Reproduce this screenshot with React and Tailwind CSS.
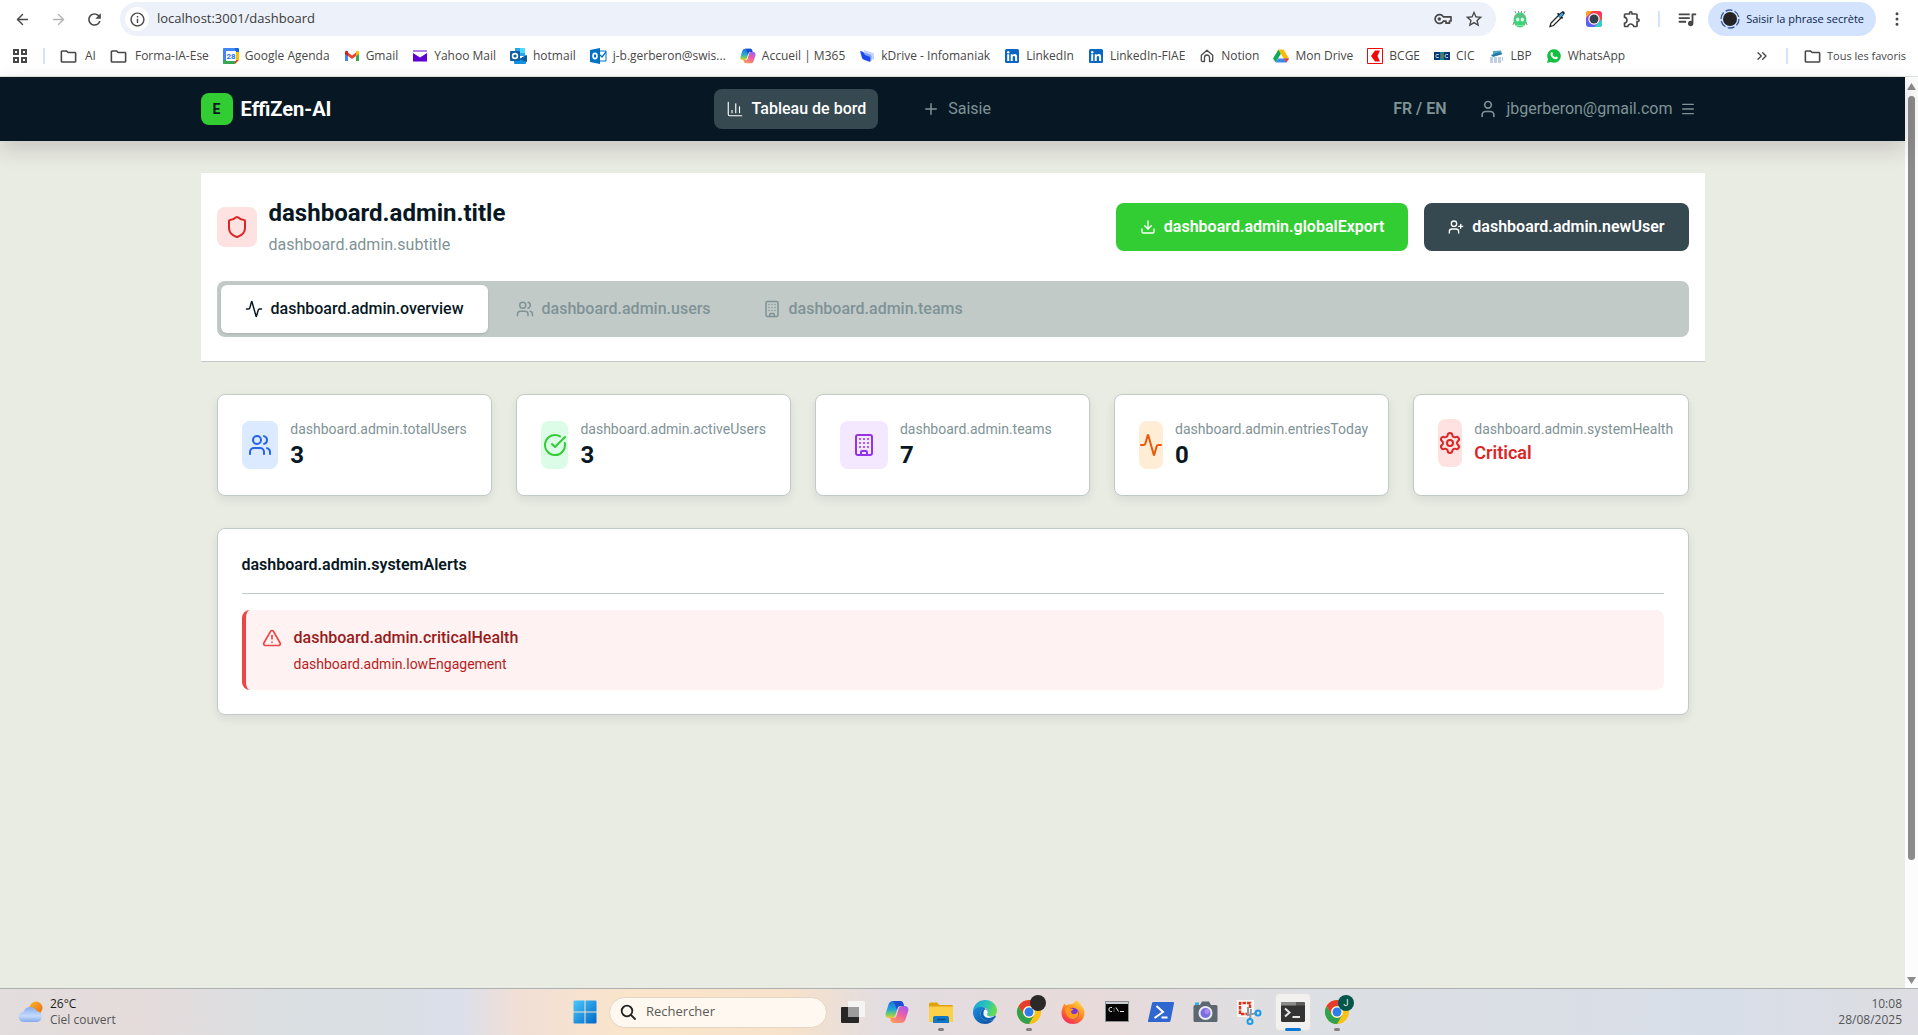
import React from "react";
import {
  Activity,
  ArrowLeft,
  ArrowRight,
  Building,
  ChartColumn,
  ChevronsRight,
  CircleCheckBig,
  Download,
  EllipsisVertical,
  Menu,
  Plus,
  Settings,
  Shield,
  TriangleAlert,
  User,
  UserPlus,
  Users,
} from "lucide-react";
import {
  MdInfoOutline,
  MdOutlineExtension,
  MdOutlineFolder,
  MdOutlineQueueMusic,
  MdRefresh,
  MdStarOutline,
} from "react-icons/md";

/* ---------- Browser icons ---------- */

const Folder = () => <MdOutlineFolder size={19} className="-mx-px shrink-0 text-[#474747]" />;

const AppsGrid = () => (
  <svg width="16" height="16" viewBox="0 0 16 16" fill="none" stroke="#474747" strokeWidth="2">
    <path d="M2 2h4v4H2zM10 2h4v4h-4zM2 10h4v4H2zM10 10h4v4h-4z" />
  </svg>
);

const KeyIcon = () => (
  <svg width="18" height="12" viewBox="0 0 18 12" fill="none" stroke="#474747" strokeWidth="1.700" strokeLinejoin="round">
    <path d="M9.300 3.800A4.400 4.400 0 1 0 9.300 8.200H12v2h3.500V8H17V3.800z" />
    <circle cx="5.300" cy="6" r="1.700" fill="#474747" stroke="none" />
  </svg>
);

const CalendarLogo = () => (
  <svg width="16" height="16" viewBox="0 0 16 16">
    <path d="M0 1a1 1 0 0 1 1-1h11v4H4v12H1a1 1 0 0 1-1-1z" fill="#4285f4" />
    <path d="M12 0h3a1 1 0 0 1 1 1v3h-4z" fill="#1967d2" />
    <path d="M12 4h4v8h-4z" fill="#fbbc04" />
    <path d="M4 12h8v4H1l-1-1v-3z" fill="#34a853" />
    <path d="M12 12h4l-4 4z" fill="#ea4335" />
    <path d="M3 3h10v10H3z" fill="#fff" />
    <text x="8" y="11" fontSize="8" fontWeight="700" textAnchor="middle" fill="#1a73e8" fontFamily="Roboto, sans-serif">28</text>
  </svg>
);

const GmailLogo = () => (
  <svg width="16" height="16" viewBox="0 0 16 16">
    <path d="M1 4v9h3V7z" fill="#4285f4" />
    <path d="M15 4v9h-3V7z" fill="#34a853" />
    <path d="M4 4.500l4 3 4-3V8l-4 3-4-3z" fill="#ea4335" />
    <path d="M1 4.500C1 2.500 2.800 2.500 4 3.500V8L1 6z" fill="#c5221f" />
    <path d="M15 4.500c0-2-1.800-2-3-1V8l3-2z" fill="#fbbc04" />
  </svg>
);

const YahooLogo = () => (
  <svg width="16" height="16" viewBox="0 0 16 16">
    <path d="M1 2.500h14V13.500H1z" fill="#6001d2" />
    <path d="M1 3.500h14v1.500L8 9.500 1 5z" fill="#fff" />
  </svg>
);

const OutlookLogo = () => (
  <svg width="17" height="16" viewBox="0 0 17 16">
    <path d="M5 0h10v8H5z" fill="#28a8ea" />
    <path d="M10 0h5v5h-5z" fill="#50d9ff" />
    <path d="M4 8l6 3 6-4v8a1 1 0 0 1-1 1H5a1 1 0 0 1-1-1z" fill="#1490df" />
    <path d="M9 11l8-4v7z" fill="#0a5a9e" />
    <rect y="3" width="10" height="10" rx="1" fill="#0f5ea8" />
    <circle cx="5" cy="8" r="2.400" fill="none" stroke="#fff" strokeWidth="1.600" />
  </svg>
);

const OutlookWebLogo = () => (
  <svg width="17" height="16" viewBox="0 0 17 16">
    <path d="M9 3h7v10H9z" fill="#fff" stroke="#0072c6" />
    <path d="M9 6l3 3 4-5" fill="none" stroke="#0072c6" strokeWidth="1.300" />
    <path d="M0 2l10-2v16L0 14z" fill="#0072c6" />
    <ellipse cx="5" cy="8" rx="2" ry="2.600" fill="none" stroke="#fff" strokeWidth="1.600" />
  </svg>
);

const CopilotLogo = ({ size = 16 }) => (
  <svg width={size} height={size} viewBox="0 0 24 24">
    <defs>
      <linearGradient id={`cpA${size}`} x1="0" y1="0" x2="0" y2="1">
        <stop offset="0" stopColor="#1f6fe5" />
        <stop offset="0.500" stopColor="#22a7d6" />
        <stop offset="0.800" stopColor="#7ccf5b" />
        <stop offset="1" stopColor="#f6c52c" />
      </linearGradient>
      <linearGradient id={`cpB${size}`} x1="0.800" y1="0" x2="0.300" y2="1">
        <stop offset="0" stopColor="#a15bf0" />
        <stop offset="0.500" stopColor="#ee5fa5" />
        <stop offset="1" stopColor="#ff9a5a" />
      </linearGradient>
    </defs>
    <path d="M8 1h7.500c1.300 0 2.300 1 2.700 2.200L19 6h-3.500c-1.600 0-2.600.8-3 2.300L10.500 15c-.6 2-1.600 3-3.500 3H4.500C1.500 18 0 16 .8 13L3.500 4.500C4.300 2.200 5.600 1 8 1z" fill={`url(#cpA${size})`} />
    <path d="M16 23H8.500c-1.300 0-2.300-1-2.700-2.200L5 18h3.500c1.600 0 2.600-.8 3-2.300L13.500 9c.6-2 1.600-3 3.500-3h2.500c3 0 4.500 2 3.700 5l-2.700 8.500C19.700 21.800 18.400 23 16 23z" fill={`url(#cpB${size})`} />
    <path d="M8 1h7.500c1.300 0 2.300 1 2.700 2.200L19 6h-3.500c-1.600 0-2.600.8-3 2.300L12 10 9.500 3.500z" fill="#1c4fd0" />
  </svg>
);

const KDriveLogo = () => (
  <svg width="16" height="16" viewBox="0 0 16 16">
    <path d="M5 2l8 2.500c1.500.5 2 1 2 2V12L5 8z" fill="#c3d3fb" />
    <path d="M3 4l8 2.500c1 .4 1.500 1 1.500 2V13L3 10z" fill="#7ea2f7" />
    <path d="M1 3l3 .8L6 7l4 1.500c1 .4 1.300 1 1.300 2V14L5.500 12C4.200 11.500 3.500 11 3 10z" fill="#1b49f0" />
  </svg>
);

const LinkedInLogo = () => (
  <svg width="16" height="16" viewBox="0 0 16 16">
    <rect x="1" y="1" width="14" height="14" rx="1.500" fill="#0a66c2" />
    <path d="M3.200 6.300h2V13h-2zM6.700 6.300h2v1c.5-.8 1.200-1.200 2.100-1.200 1.800 0 2.300 1.200 2.300 2.900v4h-2V9.500c0-.9-.3-1.600-1.100-1.600-.9 0-1.300.7-1.300 1.600V13h-2z" fill="#fff" />
    <circle cx="4.200" cy="4.200" r="1.200" fill="#fff" />
  </svg>
);

const NotionHome = () => (
  <svg width="16" height="16" viewBox="0 0 16 16" fill="none" stroke="#4a4a4a" strokeWidth="1.300" strokeLinejoin="round" strokeLinecap="round">
    <path d="M2.300 7.200L8 2.300l5.700 4.900v5c0 .8-.5 1.300-1.300 1.300H10.500V9.500a2.500 2.500 0 0 0-5 0v4H3.600c-.8 0-1.300-.5-1.300-1.300z" />
  </svg>
);

const DriveLogo = () => (
  <svg width="16" height="16" viewBox="0 0 16 16">
    <path d="M5.500 1.500L0 10.500l2.700 4L8 5.500z" fill="#0fa958" />
    <path d="M5.500 1.500h5L16 10.500h-5.300z" fill="#fbbc04" />
    <path d="M5.300 10.500H16l-2.700 4H2.700z" fill="#4285f4" />
    <path d="M10.700 10.500H16l-2.700 4z" fill="#ea4335" />
  </svg>
);

const BcgeLogo = () => (
  <svg width="16" height="16" viewBox="0 0 16 16">
    <path d="M.5.500h15v15H.5z" fill="#fff" stroke="#f00808" />
    <path d="M8 2.500h5L10.500 8l2.500 5.500H8L4 8z" fill="#f00808" />
  </svg>
);

const CicLogo = () => (
  <svg width="16" height="16" viewBox="0 0 16 16">
    <path d="M0 4h16v8H0z" fill="#063a73" />
    <path d="M6 4h4v8H6z" fill="#0c8a86" />
    <path d="M4.800 6.500H3a1 1 0 0 0-1 1v1a1 1 0 0 0 1 1h1.800M14 6.500h-1.800a1 1 0 0 0-1 1v1a1 1 0 0 0 1 1H14" fill="none" stroke="#c9d6e6" />
    <path d="M7.400 5.500h1.200v5H7.400z" fill="#e8432e" />
  </svg>
);

const LbpLogo = () => (
  <svg width="16" height="16" viewBox="0 0 16 16">
    <path d="M4 3l8-.5 1 4-9 2z" fill="#54a6c9" />
    <path d="M2 7l9-3 2 2-9 3z" fill="#2577a5" />
    <path d="M1 10h13M1 12h13M1 14h12" stroke="#7e9fc9" strokeWidth="1.200" strokeDasharray="3 1" />
  </svg>
);

const WhatsAppLogo = () => (
  <svg width="16" height="16" viewBox="0 0 16 16">
    <path d="M1 15l1-3.800A6.800 6.800 0 1 1 4.800 14z" fill="#12bf41" />
    <path d="M5.300 4.200c.5-.4 1-.2 1.200.3l.5 1.100c.1.400-.5.900-.6 1.200.6 1.200 1.500 2 2.700 2.500.4-.2.700-.9 1.100-.9l1.300.7c.6.400.3 1.300-.4 1.800-1 .6-2.300.3-3.700-.5C5.800 9.400 4.600 7.800 4.500 6.200c0-.8.300-1.600.8-2z" fill="#fff" />
  </svg>
);

const BugIcon = () => (
  <svg width="16" height="18" viewBox="0 0 16 18">
    <path d="M4 3.500L3 1M12 3.500l1-2.500M6.500 3V1M9.500 3V1M2 12l-1 3M14 12l1 3" stroke="#8a8f8c" strokeWidth="1" />
    <ellipse cx="8" cy="10" rx="6.500" ry="7.500" fill="#43d17c" />
    <path d="M2.500 6h11" stroke="#8fa096" strokeWidth="1" />
    <ellipse cx="5.700" cy="9.500" rx="1.600" ry="2" fill="#e7fff0" />
    <ellipse cx="10.300" cy="9.500" rx="1.600" ry="2" fill="#e7fff0" />
    <path d="M4 15.500h8" stroke="#89e5ae" strokeWidth="1" />
  </svg>
);

const DropperIcon = () => (
  <svg width="18" height="18" viewBox="0 0 18 18">
    <path d="M2 16.500l1-3.500 7.500-7.500 2.500 2.500L5.500 15.500z" fill="#fff" stroke="#232323" strokeWidth="1.300" />
    <path d="M9 4l5 5 1.200-1.200-1-1.100L16.500 4c1-1.500-1-3.500-2.500-2.500L11.300 3.800l-1.100-1z" fill="#1b1b1b" />
    <path d="M10.500 6l3.500-3.500 1.700 1.700-3.400 3.500z" fill="#3ba7f0" />
  </svg>
);

const LensIcon = () => (
  <svg width="16" height="16" viewBox="0 0 16 16">
    <defs>
      <linearGradient id="lensA" x1="1" y1="0" x2="0.200" y2="1">
        <stop offset="0" stopColor="#f5287c" />
        <stop offset="0.350" stopColor="#ff4a3a" />
        <stop offset="0.600" stopColor="#9b3ff2" />
        <stop offset="1" stopColor="#4a6cf0" />
      </linearGradient>
    </defs>
    <rect width="16" height="16" rx="3" fill="url(#lensA)" />
    <path d="M0 7V3a3 3 0 0 1 3-3h3z" fill="#ffa51f" />
    <path d="M16 8v5a3 3 0 0 1-3 3H8z" fill="#2fd2c8" />
    <circle cx="8" cy="8" r="5.700" fill="#fff" />
    <circle cx="8" cy="8" r="4.500" fill="#33404d" />
  </svg>
);

const AvatarIcon = () => (
  <svg width="20" height="20" viewBox="0 0 20 20">
    <circle cx="10" cy="10" r="9" fill="none" stroke="#35579c" strokeWidth="1.300" strokeDasharray="7 2.400" />
    <circle cx="10" cy="10" r="7" fill="#242424" />
  </svg>
);

/* ---------- Browser chrome ---------- */

const bookmarks = [
  { label: "AI", icon: <Folder />, folder: true },
  { label: "Forma-IA-Ese", icon: <Folder />, folder: true },
  { label: "Google Agenda", icon: <CalendarLogo /> },
  { label: "Gmail", icon: <GmailLogo /> },
  { label: "Yahoo Mail", icon: <YahooLogo /> },
  { label: "hotmail", icon: <OutlookLogo /> },
  { label: "j-b.gerberon@swis...", icon: <OutlookWebLogo /> },
  { label: "Accueil | M365", icon: <CopilotLogo /> },
  { label: "kDrive - Infomaniak", icon: <KDriveLogo /> },
  { label: "LinkedIn", icon: <LinkedInLogo /> },
  { label: "LinkedIn-FIAE", icon: <LinkedInLogo /> },
  { label: "Notion", icon: <NotionHome /> },
  { label: "Mon Drive", icon: <DriveLogo /> },
  { label: "BCGE", icon: <BcgeLogo /> },
  { label: "CIC", icon: <CicLogo /> },
  { label: "LBP", icon: <LbpLogo /> },
  { label: "WhatsApp", icon: <WhatsAppLogo /> },
];

function Toolbar() {
  return (
    <div className="flex h-[38px] items-center bg-white px-3 text-[#474747]">
      <div className="flex items-center gap-4">
        <button aria-label="Précédent" className="flex size-5 items-center justify-center"><ArrowLeft size={17} /></button>
        <button aria-label="Suivant" className="flex size-5 items-center justify-center text-[#b4b4b4]"><ArrowRight size={17} /></button>
        <button aria-label="Actualiser" className="flex size-5 items-center justify-center"><MdRefresh size={19} /></button>
      </div>
      <div className="ml-4 flex h-[34px] flex-1 items-center gap-2 rounded-full bg-[#edf1fa] pr-3 pl-[5px]">
        <button aria-label="Informations sur le site" className="flex size-6 items-center justify-center rounded-full bg-white">
          <MdInfoOutline size={17} />
        </button>
        <input
          aria-label="Adresse"
          defaultValue="localhost:3001/dashboard"
          className="min-w-0 flex-1 bg-transparent text-[13px] text-[#3a3a3a] outline-none"
        />
        <button aria-label="Mots de passe"><KeyIcon /></button>
        <button aria-label="Ajouter aux favoris" className="ml-1"><MdStarOutline size={20} /></button>
      </div>
      <div className="ml-4 flex items-center gap-5">
        <button aria-label="Extension Android"><BugIcon /></button>
        <button aria-label="Pipette"><DropperIcon /></button>
        <button aria-label="Capture"><LensIcon /></button>
        <button aria-label="Extensions"><MdOutlineExtension size={20} /></button>
      </div>
      <span className="mx-4 h-4 w-0.5 bg-[#d3e3fd]" />
      <button aria-label="Médias"><MdOutlineQueueMusic size={22} /></button>
      <button className="ml-2.5 flex h-[34px] items-center gap-1.5 rounded-full bg-[#d3e3fd] px-3 text-[11px] font-medium text-[#0a2350]">
        <AvatarIcon />
        Saisir la phrase secrète
      </button>
      <button aria-label="Menu" className="ml-3"><EllipsisVertical size={18} /></button>
    </div>
  );
}

function BookmarksBar() {
  return (
    <div className="flex h-[39px] items-center border-b border-[#dfe2dc] bg-white px-3 pb-0.5 text-xs whitespace-nowrap text-[#474747]">
      <button aria-label="Applications"><AppsGrid /></button>
      <span className="mx-[15px] h-4 w-0.5 bg-[#d3e3fd]" />
      <nav className="flex items-center gap-3.5">
        {bookmarks.map((b) => (
          <a key={b.label} href="#" className={`flex items-center ${b.folder ? "gap-2" : "gap-1.5"}`}>
            {b.icon}
            {b.label}
          </a>
        ))}
      </nav>
      <div className="ml-auto flex items-center">
        <button aria-label="Autres favoris"><ChevronsRight size={16} /></button>
        <span className="mx-4 h-4 w-0.5 bg-[#d3e3fd]" />
        <a href="#" className="flex items-center gap-1.5 text-[11px]"><Folder />Tous les favoris</a>
      </div>
    </div>
  );
}

/* ---------- Application ---------- */

function AppHeader() {
  return (
    <header className="relative bg-[#071824] shadow-[0_8px_22px_rgba(50,20,40,0.18)]">
      <div className="mx-auto flex h-16 max-w-[1536px] items-center justify-between px-4">
        <a href="#" className="flex items-center gap-2">
          <span className="flex size-8 items-center justify-center rounded-lg bg-[#32cd32] text-sm font-bold text-[#071824]">E</span>
          <span className="text-xl font-bold text-white">EffiZen-AI</span>
        </a>
        <nav className="flex items-center gap-8">
          <a href="#" className="flex h-10 items-center gap-2 rounded-lg bg-[#364850] px-3 font-medium text-white">
            <ChartColumn size={18} strokeWidth={1.500} />
            Tableau de bord
          </a>
          <a href="#" className="flex h-10 items-center gap-2 rounded-lg px-3 text-[#7f9396]">
            <Plus size={18} />
            Saisie
          </a>
        </nav>
        <div className="flex items-center gap-4 text-[#7f9396]">
          <button className="px-2 font-semibold">FR / EN</button>
          <button className="flex items-center gap-2 px-2">
            <User size={20} />
            jbgerberon@gmail.com
            <Menu size={16} />
          </button>
        </div>
      </div>
    </header>
  );
}

const tabs = [
  { label: "dashboard.admin.overview", Icon: Activity, active: true },
  { label: "dashboard.admin.users", Icon: Users },
  { label: "dashboard.admin.teams", Icon: Building },
];

function AdminHeader() {
  return (
    <section className="border-b border-[#c1cac7] bg-white px-4 py-6">
      <div className="flex items-center justify-between">
        <div className="flex items-center gap-3">
          <div className="flex size-10 items-center justify-center rounded-lg bg-[#fee2e2] text-[#dc2626]">
            <Shield size={24} />
          </div>
          <div>
            <h1 className="text-2xl font-bold text-[#071824]">dashboard.admin.title</h1>
            <p className="mt-1 text-[#7f9396]">dashboard.admin.subtitle</p>
          </div>
        </div>
        <div className="flex gap-4 font-semibold text-white">
          <button className="flex h-12 items-center gap-2 rounded-lg bg-[#32cd32] px-6">
            <Download size={16} />
            dashboard.admin.globalExport
          </button>
          <button className="flex h-12 items-center gap-2 rounded-lg bg-[#364850] px-6">
            <UserPlus size={16} />
            dashboard.admin.newUser
          </button>
        </div>
      </div>
      <div role="tablist" className="mt-6 flex gap-1 rounded-lg bg-[#c1cac7] p-1 font-medium">
        {tabs.map(({ label, Icon, active }) => (
          <button
            key={label}
            role="tab"
            aria-selected={!!active}
            className={`flex h-12 items-center gap-2 rounded-md px-6 ${active ? "bg-white text-[#071824] shadow-sm" : "text-[#7f9396]"}`}
          >
            <Icon size={18} />
            {label}
          </button>
        ))}
      </div>
    </section>
  );
}

const stats = [
  { label: "dashboard.admin.totalUsers", value: "3", Icon: Users, tone: "bg-[#dbeafe] text-[#2563eb]" },
  { label: "dashboard.admin.activeUsers", value: "3", Icon: CircleCheckBig, tone: "bg-[#dcfce7] text-[#32cd32]" },
  { label: "dashboard.admin.teams", value: "7", Icon: Building, tone: "bg-[#f3e8ff] text-[#9333ea]" },
  { label: "dashboard.admin.entriesToday", value: "0", Icon: Activity, tone: "bg-[#ffedd5] text-[#ea580c]" },
  { label: "dashboard.admin.systemHealth", value: "Critical", critical: true, Icon: Settings, tone: "bg-[#fee2e2] text-[#dc2626]" },
];

const cardClass = "rounded-lg border border-[#c1cac7] bg-white p-6 shadow-[0_4px_10px_rgba(7,24,36,0.08)]";

function StatCard({ label, value, Icon, tone, critical }) {
  return (
    <article className={cardClass}>
      <div className="flex items-center gap-3">
        <div className={`flex h-12 w-12 items-center justify-center rounded-lg ${tone}`}>
          <Icon size={24} className="shrink-0" />
        </div>
        <div>
          <p className="text-sm text-[#7f9396]">{label}</p>
          <p className={critical ? "text-lg font-semibold text-[#dc2626]" : "text-2xl font-bold text-[#071824]"}>{value}</p>
        </div>
      </div>
    </article>
  );
}

function Alerts() {
  return (
    <section className={cardClass}>
      <h2 className="border-b border-[#c1cac7] pb-4 font-semibold text-[#071824]">dashboard.admin.systemAlerts</h2>
      <div role="alert" className="mt-4 flex items-start gap-3 rounded-lg border-l-4 border-[#ef4444] bg-[#fef2f2] p-4">
        <TriangleAlert size={20} className="mt-0.5 text-[#ef4444]" />
        <div>
          <p className="font-medium text-[#991b1b]">dashboard.admin.criticalHealth</p>
          <p className="mt-1 text-sm text-[#b91c1c]">dashboard.admin.lowEngagement</p>
        </div>
      </div>
    </section>
  );
}

function Scrollbar() {
  return (
    <div className="flex w-[13px] flex-col items-center gap-1.5 bg-[#fcfcfc] pt-1.5 pb-1" aria-hidden="true">
      <svg width="9" height="7" viewBox="0 0 9 7" className="shrink-0"><path d="M4.500 0L9 7H0z" fill="#8b8b8b" /></svg>
      <span className="w-[7px] flex-[87] rounded-full bg-[#8b8b8b]" />
      <span className="flex-[12]" />
      <svg width="9" height="7" viewBox="0 0 9 7" className="shrink-0"><path d="M0 0h9L4.500 7z" fill="#8b8b8b" /></svg>
    </div>
  );
}

/* ---------- Taskbar ---------- */

const WeatherIcon = () => (
  <svg width="26" height="24" viewBox="0 0 26 24">
    <defs>
      <linearGradient id="sun" x1="0" y1="0" x2="1" y2="1">
        <stop offset="0" stopColor="#f6b42a" />
        <stop offset="1" stopColor="#ee6a13" />
      </linearGradient>
      <linearGradient id="cloud" x1="0" y1="0" x2="0" y2="1">
        <stop offset="0" stopColor="#86aef0" />
        <stop offset="0.600" stopColor="#c5dafb" />
        <stop offset="1" stopColor="#86a9ec" />
      </linearGradient>
    </defs>
    <circle cx="18" cy="8" r="6.500" fill="url(#sun)" />
    <path d="M6 22a5 5 0 0 1-.6-10A7 7 0 0 1 18.500 11 5.600 5.600 0 0 1 19.500 22z" fill="url(#cloud)" />
  </svg>
);

const WindowsLogo = () => (
  <svg width="24" height="24" viewBox="0 0 24 24">
    <defs>
      <linearGradient id="win" x1="0" y1="0" x2="1" y2="1">
        <stop offset="0" stopColor="#4cc9fb" />
        <stop offset="1" stopColor="#0067c8" />
      </linearGradient>
    </defs>
    <path d="M.5 1.500a1 1 0 0 1 1-1h10v11H.5zM12.500.500h10a1 1 0 0 1 1 1v10h-11zM.5 12.500h11v11h-10a1 1 0 0 1-1-1zM12.500 12.500h11v10a1 1 0 0 1-1 1h-10z" fill="url(#win)" />
  </svg>
);

const TaskViewIcon = () => (
  <svg width="24" height="24" viewBox="0 0 24 24">
    <rect y="7" width="18" height="16" rx="1" fill="#262626" />
    <rect x="7" y="1" width="17" height="16" rx="1" fill="#f4f4f4" opacity="0.950" />
    <path d="M7 7h11v10H7z" fill="#9c9c9c" />
  </svg>
);

const ExplorerIcon = () => (
  <svg width="24" height="24" viewBox="0 0 24 24">
    <path d="M0 4a1.500 1.500 0 0 1 1.500-1.500H8l2.500 2.500H22A1.500 1.500 0 0 1 24 6.500V10H0z" fill="#e0a10b" />
    <path d="M0 6.500h24V22H0z" fill="#fdd04a" />
    <path d="M4 23v-5a2 2 0 0 1 2-2h12a2 2 0 0 1 2 2v5z" fill="#1277c4" />
    <path d="M8 19.500h8" stroke="#0a4d88" strokeWidth="1.500" />
  </svg>
);

const EdgeIcon = () => (
  <svg width="24" height="24" viewBox="0 0 24 24">
    <defs>
      <linearGradient id="edA" x1="0" y1="0" x2="1" y2="0.300">
        <stop offset="0" stopColor="#1e9de0" />
        <stop offset="0.600" stopColor="#2bc4b8" />
        <stop offset="1" stopColor="#63dc54" />
      </linearGradient>
      <linearGradient id="edB" x1="0" y1="0" x2="1" y2="1">
        <stop offset="0" stopColor="#1a8fe0" />
        <stop offset="1" stopColor="#0c4a98" />
      </linearGradient>
    </defs>
    <path d="M0 12C0 4.500 6 0 12 0c7 0 12 5 12 10.500 0 4-3 6-6 6-3.500 0-4.500-1.500-3.500-3 2-3-1-6-5-6C5 7.500 1 9 0 12z" fill="url(#edA)" />
    <path d="M0 12c.5-3 4-5 8-5 2 0 3.500.5 4.500 1.500C9 9 7.500 11.500 7.500 14c0 4 4 7 8.500 7 2.200 0 4-.7 5.500-1.700C19 22.500 15.500 24 12 24 5 24 0 18.500 0 12z" fill="url(#edB)" />
    <path d="M7.500 14c0-2.500 1.500-5 4.500-5.500 3 1.500 3.500 3.500 2.500 5-1 1.500 0 3 3.500 3 1.500 0 3-.5 4-1.200.7.200 1 1 .5 2C21 19.500 18.500 21 16 21c-4.500 0-8.500-3-8.500-7z" fill="#0f5fb5" />
    <path d="M10.500 12c.5-2 1.500-3 2.500-2.500 2 1.500 2.200 2.700 1.500 4-1 1.500 0 3 3.500 3 1.500 0 3-.5 4-1.200-1.500 2.500-9 4.500-11.500-.3z" fill="#e9f5fb" />
  </svg>
);

const ChromeIcon = ({ badge, letter }) => (
  <svg width="32" height="30" viewBox="0 0 32 30">
    <g transform="translate(2 5)">
      <circle cx="12" cy="12" r="12" fill="#fbc116" />
      <path d="M1.600 6A12 12 0 0 1 22.400 6H12a6 6 0 0 0-5.200 9z" fill="#e53b30" />
      <path d="M1.600 6A12 12 0 0 0 12 24l5.200-9A6 6 0 0 1 6.800 15z" fill="#2fa24f" />
      <circle cx="12" cy="12" r="5.800" fill="#fff" />
      <circle cx="12" cy="12" r="4.500" fill="#2f7de8" />
    </g>
    <circle cx="23" cy="8" r="8" fill={badge} />
    {letter && <text x="23" y="11" fontSize="9" textAnchor="middle" fill="#e6efec" fontFamily="Roboto, sans-serif">{letter}</text>}
  </svg>
);

const FirefoxIcon = () => (
  <svg width="24" height="24" viewBox="0 0 24 24">
    <defs>
      <linearGradient id="ffA" x1="0.800" y1="0" x2="0.200" y2="1">
        <stop offset="0" stopColor="#ffe14a" />
        <stop offset="0.450" stopColor="#ff8b1f" />
        <stop offset="1" stopColor="#f3225e" />
      </linearGradient>
    </defs>
    <path d="M15 0c3 1.500 4 3.500 5 5 2.500 2.500 3.500 5 3.500 8C23.500 19 18.500 24 12 24S.5 19 .5 13c0-3 1-5.500 2-7.500l.5-2 2 2C6.500 4.500 8.500 4 10 4.200 12 4 14.500 2 15 0z" fill="url(#ffA)" />
    <circle cx="12" cy="13.500" r="5.800" fill="#7a35d8" />
    <path d="M4 8c2-1 4-.5 5 .5 1.500 0 3 .2 3.500 1-1 1-2 1.200-2.500 2 0 2 2 3 4 2.500 1.500-.4 2.500-1.500 2.700-3 2 4-.7 8-4.700 8-5 0-8-5-8-11z" fill="#ff9a1c" />
  </svg>
);

const CmdIcon = () => (
  <svg width="24" height="22" viewBox="0 0 24 22">
    <rect x="0.500" y="0.500" width="23" height="20" fill="#060606" stroke="#8a8f94" />
    <path d="M1 1h22v2H1z" fill="#c9cdd1" />
    <path d="M7 6.500H5.500A1.500 1.500 0 0 0 4 8v1a1.500 1.500 0 0 0 1.500 1.500H7M9 7.500v.8M9 9.700v.8M11 6.500l2.500 4M15 10.500h4" fill="none" stroke="#e8e8e8" />
  </svg>
);

const PowerShellIcon = () => (
  <svg width="26" height="20" viewBox="0 0 26 20">
    <path d="M5.500 0H25a1 1 0 0 1 1 1.200L22.500 19a1.500 1.500 0 0 1-1.500 1H1a1 1 0 0 1-1-1.200L4 1.200A1.500 1.500 0 0 1 5.500 0z" fill="#2f66cf" />
    <path d="M8.500 4l6.500 6-8.500 6M13.500 15.500h6" fill="none" stroke="#fff" strokeWidth="2" />
  </svg>
);

const CameraIcon = () => (
  <svg width="25" height="22" viewBox="0 0 25 22">
    <path d="M2 1.500h4v3H2z" fill="#35b0ea" />
    <path d="M2 4h5l2-3.500h7L18 4h5a1.500 1.500 0 0 1 1.500 1.500v14A1.500 1.500 0 0 1 23 21H2A1.500 1.500 0 0 1 .5 19.500v-14A1.500 1.500 0 0 1 2 4z" fill="#5d676f" />
    <circle cx="12.500" cy="12" r="7" fill="#e9ecf2" />
    <circle cx="12.500" cy="12" r="5" fill="#7b6ee0" />
    <circle cx="14" cy="10.500" r="2.500" fill="#ad8cf0" />
  </svg>
);

const SnipIcon = () => (
  <svg width="26" height="26" viewBox="0 0 26 26">
    <path d="M1 1h17v17H1z" fill="#f7f7f7" />
    <path d="M13 15H4V4h10v6" fill="none" stroke="#d9361a" strokeWidth="2.500" strokeDasharray="3.500 1" />
    <path d="M12 8v8l9-2M14 21l1-11" fill="none" stroke="#8d98a3" strokeWidth="2" />
    <circle cx="22" cy="14" r="2.500" fill="none" stroke="#1b9ce6" strokeWidth="2" />
    <circle cx="14" cy="22.500" r="2.500" fill="none" stroke="#1b9ce6" strokeWidth="2" />
  </svg>
);

const TerminalIcon = () => (
  <svg width="24" height="20" viewBox="0 0 24 20">
    <rect width="24" height="20" rx="1.500" fill="#333" />
    <path d="M1.500 0H15v3.500H0V1.500A1.500 1.500 0 0 1 1.500 0z" fill="#8b8b8b" />
    <path d="M15 0h7.500A1.500 1.500 0 0 1 24 1.500v2h-9z" fill="#5c5c5c" />
    <path d="M4 6.500l4.500 4L4 14.500M11.500 15H19" fill="none" stroke="#e5e5e5" strokeWidth="2" />
  </svg>
);

const apps = [
  { name: "Vue des tâches", icon: <TaskViewIcon /> },
  { name: "Copilot", icon: <CopilotLogo size={24} /> },
  { name: "Explorateur de fichiers", icon: <ExplorerIcon />, state: "open" },
  { name: "Edge", icon: <EdgeIcon /> },
  { name: "Chrome", icon: <ChromeIcon badge="#2b2a29" />, state: "open", badge: true },
  { name: "Firefox", icon: <FirefoxIcon /> },
  { name: "Invite de commandes", icon: <CmdIcon /> },
  { name: "PowerShell", icon: <PowerShellIcon /> },
  { name: "Caméra", icon: <CameraIcon /> },
  { name: "Capture d'écran", icon: <SnipIcon /> },
  { name: "Terminal", icon: <TerminalIcon />, state: "active" },
  { name: "Chrome J", icon: <ChromeIcon badge="#05564a" letter="J" />, state: "open", badge: true },
];

function Taskbar() {
  return (
    <footer className="grid h-[47px] grid-cols-[1fr_auto_1fr] items-center border-t border-[#acb0b0] bg-[linear-gradient(90deg,#e2dedd_0%,#e5dbdb_7%,#dadfe2_15%,#dadfe4_20%,#dbdfeb_24%,#f1dfd6_27%,#fae5ca_33%,#f8e2ca_41%,#e2dde1_46%,#e8dada_57%,#dcdfe3_68%,#d8dee8_90%,#dddde2_100%)] text-xs text-[#555]">
      <button className="flex items-center gap-1.5 justify-self-start pl-[18px] text-left">
        <WeatherIcon />
        <span>
          <span className="block leading-4 text-[#1c1c1c]">26°C</span>
          <span className="block leading-4">Ciel couvert</span>
        </span>
      </button>
      <div className="flex items-center pl-0.5">
        <button aria-label="Démarrer" className="flex h-11 w-12 items-center justify-center"><WindowsLogo /></button>
        <label className="mr-1 flex h-[31px] w-[218px] items-center gap-2.5 rounded-full border border-[#e4d6c4] bg-[#fef8f0] pl-2.5">
          <svg width="16" height="16" viewBox="0 0 16 16" fill="none" stroke="#222" strokeWidth="1.800" strokeLinecap="round">
            <circle cx="7" cy="7" r="5.300" />
            <path d="M11 11l4 4" />
          </svg>
          <input aria-label="Rechercher" placeholder="Rechercher" className="min-w-0 flex-1 bg-transparent text-[13px] outline-none placeholder:text-[#5d5a57]" />
        </label>
        {apps.map((app) => (
          <button key={app.name} aria-label={app.name} className="relative flex h-[46px] w-11 items-center justify-center">
            {app.state === "active" && <span className="absolute inset-x-1 top-1 bottom-1 rounded border border-[#e2dfdf] bg-[#f3f0f0]" />}
            <span className={`relative ${app.badge ? "pb-1 pl-1" : ""}`}>{app.icon}</span>
            {app.state === "open" && <span className="absolute bottom-1 h-[3px] w-1.5 rounded-full bg-[#83807f]" />}
            {app.state === "active" && <span className="absolute bottom-1 h-[3px] w-4 rounded-full bg-[#0a78d4]" />}
          </button>
        ))}
      </div>
      <button className="justify-self-end pr-4 text-right leading-4">
        <span className="block">10:08</span>
        <span className="block">28/08/2025</span>
      </button>
    </footer>
  );
}

export default function App() {
  return (
    <div className="flex min-h-screen flex-col font-['Open_Sans',sans-serif]">
      <Toolbar />
      <BookmarksBar />
      <div className="flex flex-1 items-stretch">
        <div className="min-w-0 flex-1 bg-[#e9ece3] font-['Roboto',sans-serif] text-base">
          <AppHeader />
          <main className="mx-auto max-w-[1536px] px-4 py-8">
            <AdminHeader />
            <div className="flex flex-col gap-8 px-4 pt-8">
              <div className="grid grid-cols-5 gap-6">
                {stats.map((s) => (
                  <StatCard key={s.label} {...s} />
                ))}
              </div>
              <Alerts />
            </div>
          </main>
        </div>
        <Scrollbar />
      </div>
      <Taskbar />
    </div>
  );
}
